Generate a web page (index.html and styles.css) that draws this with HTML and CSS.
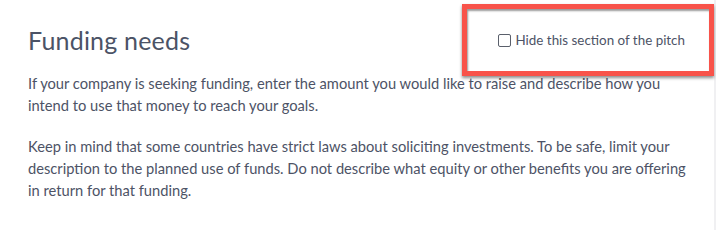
FILE: index.html
```html
<!DOCTYPE html>
<html lang="en">
<head>
<meta charset="utf-8">
<title>Funding needs</title>
<link rel="stylesheet" href="styles.css">
</head>
<body>
<div class="page">
  <section class="card">
    <header class="section-head">
      <h2 class="section-title">Funding needs</h2>
      <label class="hide-toggle">
        <span class="checkbox"></span>
        <span class="hide-label">Hide this section of the pitch</span>
      </label>
    </header>
    <p class="copy">If your company is seeking funding, enter the amount you would like to raise and describe how you intend to use that money to reach your goals.</p>
    <p class="copy">Keep in mind that some countries have strict laws about soliciting investments. To be safe, limit your description to the planned use of funds. Do not describe what equity or other benefits you are offering in return for that funding.</p>
  </section>
  <div class="annotation"></div>
</div>
</body>
</html>
```
FILE: styles.css
```css
html, body {
  margin: 0;
  padding: 0;
  background: #ffffff;
}
.page {
  position: relative;
  width: 716px;
  min-height: 219px;
}
.card {
  width: 716px;
  min-height: 219px;
  box-sizing: border-box;
  background: #ffffff;
  border-right: 2px solid #f0f0f2;
  padding: 21px 24px 10px 28px;
  font-family: Lato, "Open Sans", sans-serif;
  color: #4d5366;
}
.section-head {
  display: flex;
  align-items: center;
  justify-content: space-between;
  height: 38px;
}
.section-title {
  margin: 0;
  font-size: 25px;
  font-weight: 400;
  color: #4b5366;
  letter-spacing: 0.2px;
}
.hide-toggle {
  display: flex;
  align-items: center;
  gap: 5px;
  margin-right: 5px;
  font-size: 13.4px;
  color: #4d5366;
}
.checkbox {
  width: 11px;
  height: 11px;
  border: 1px solid #5a5f6b;
  border-radius: 2px;
  background: #fff;
}
.copy {
  margin: 0 0 19px;
  font-size: 14.7px;
  line-height: 22px;
}
.section-head + .copy {
  margin-top: 13px;
}
.annotation {
  position: absolute;
  left: 462px;
  top: 4px;
  width: 252px;
  height: 72px;
  box-sizing: border-box;
  border: 5px solid #f8534a;
  box-shadow: 0 2px 3px rgba(0, 0, 0, 0.45), inset 1px 2px 2px rgba(0, 0, 0, 0.4);
}
```
